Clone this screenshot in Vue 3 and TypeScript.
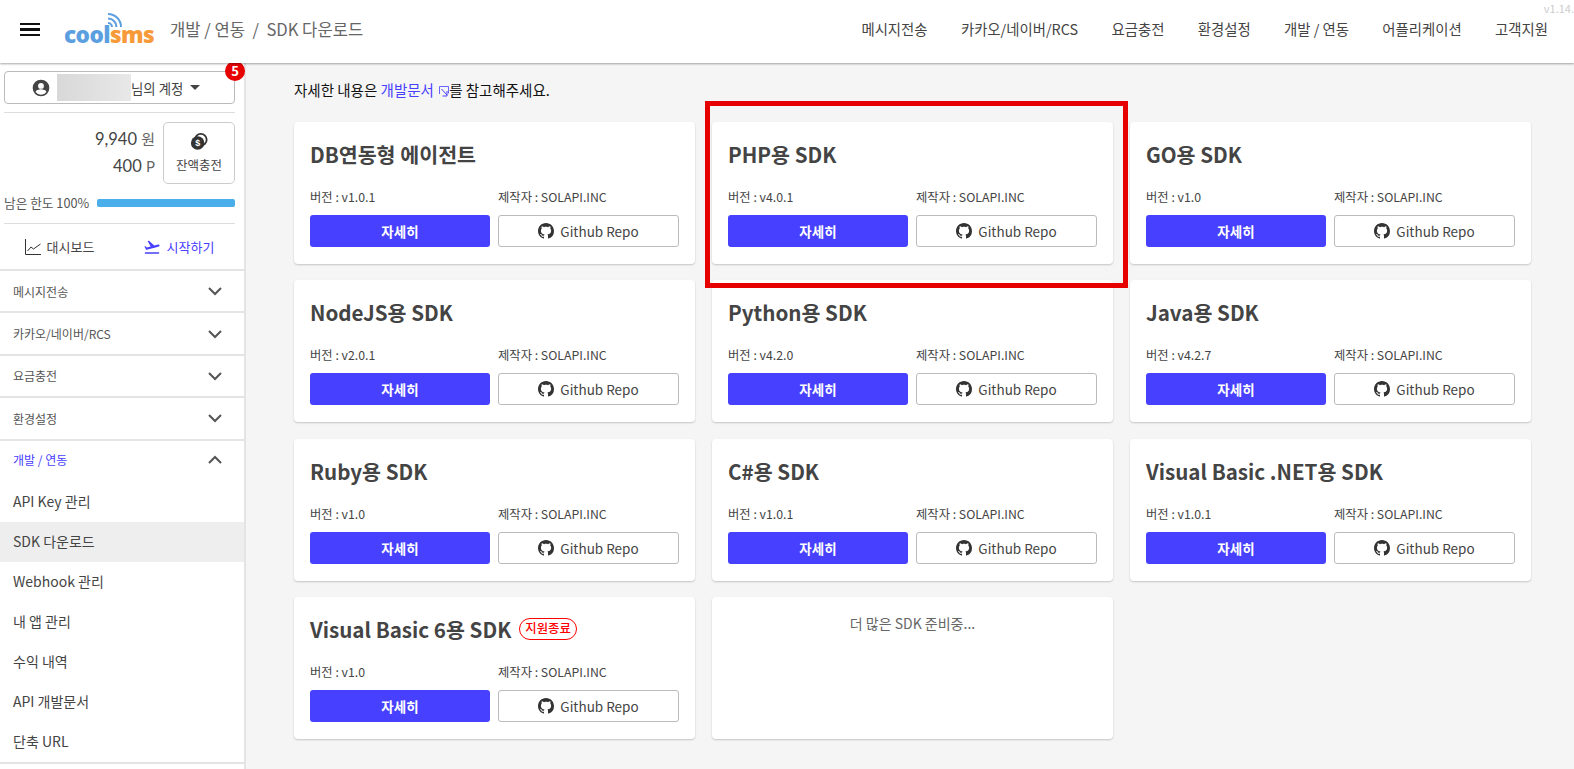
<template>
  <div class="page">
    <header class="topbar">
      <button class="burger" aria-label="menu"><span></span><span></span><span></span></button>
      <div class="logo">
        <svg class="waves" width="15" height="15" viewBox="0 0 15 15">
          <path d="M1 1A13 13 0 0 1 14 14" />
          <path d="M1 5.5A8.5 8.5 0 0 1 9.5 14" />
          <path d="M1 10A4 4 0 0 1 5 14" />
        </svg>
        <span class="cool">cool</span><span class="sms">sms</span>
      </div>
      <div class="crumbs">개발 / 연동 &nbsp;/&nbsp; SDK 다운로드</div>
      <nav class="topnav">
        <a v-for="item in topMenu" :key="item">{{ item }}</a>
      </nav>
      <span class="version">v1.14.</span>
    </header>

    <div class="body">
      <aside class="sidebar">
        <div class="account-wrap">
          <button class="account">
            <svg width="20" height="20" viewBox="0 0 24 24"><path fill="#444" d="M12 2A10 10 0 0 0 2 12a10 10 0 0 0 10 10 10 10 0 0 0 10-10A10 10 0 0 0 12 2zm0 4a3.5 3.5 0 1 1 0 7 3.5 3.5 0 0 1 0-7zm0 14a8 8 0 0 1-6.5-3.3c.03-2.15 4.33-3.33 6.5-3.33s6.47 1.18 6.5 3.33A8 8 0 0 1 12 20z" /></svg>
            <span class="blur"></span>
            <span class="account-name">님의 계정</span>
            <span class="caret"></span>
          </button>
          <span class="badge">5</span>
        </div>

        <div class="balance">
          <div class="amounts">
            <div>9,940 <small>원</small></div>
            <div>400 <small>P</small></div>
          </div>
          <button class="charge">
            <svg width="18" height="18" viewBox="0 0 20 20">
              <circle cx="12" cy="7.5" r="6.5" fill="none" stroke="#333" stroke-width="2" />
              <circle cx="8.5" cy="11" r="7.5" fill="#333" />
              <text x="8.5" y="14.5" text-anchor="middle" class="coin">$</text>
            </svg>
            <span>잔액충전</span>
          </button>
        </div>

        <div class="limit">
          <span>남은 한도 100%</span>
          <div class="track"><div class="fill" :style="{ width: limitPercent + '%' }"></div></div>
        </div>

        <div class="quick">
          <a class="quick-item">
            <svg width="16" height="16" viewBox="0 0 16 16" fill="none" stroke="#333"><path d="M.5 0v15.5H16" /><path d="M2.5 12 6 8l2.5 2L15.5 5" /></svg>
            대시보드
          </a>
          <a class="quick-item start">
            <svg width="18" height="18" viewBox="0 0 24 24"><path fill="#4840ff" d="M2.5 19h19v2h-19zm19.57-9.36c-.21-.8-1.04-1.28-1.84-1.06L14.92 10l-6.9-6.43-1.93.51 4.14 7.17-4.97 1.33-1.97-1.54-1.45.39 1.82 3.16.77 1.33 1.6-.43 5.31-1.42 4.35-1.16L21 11.49c.81-.23 1.28-1.05 1.07-1.85z" /></svg>
            시작하기
          </a>
        </div>

        <div v-for="group in sideMenu" :key="group" class="group">
          <span>{{ group }}</span>
          <svg width="16" height="10" viewBox="0 0 16 10" fill="none" stroke="#555" stroke-width="2"><path d="M2 2l6 6 6-6" /></svg>
        </div>
        <div class="group open">
          <span>개발 / 연동</span>
          <svg width="16" height="10" viewBox="0 0 16 10" fill="none" stroke="#555" stroke-width="2"><path d="M2 8l6-6 6 6" /></svg>
        </div>
        <div class="submenu">
          <a v-for="sub in subMenu" :key="sub" :class="{ active: sub === 'SDK 다운로드' }">{{ sub }}</a>
        </div>
      </aside>

      <main class="content">
        <p class="intro">
          자세한 내용은 <a>개발문서
            <svg class="ext" width="10" height="11" viewBox="0 0 10 11" fill="none" stroke="#4840ff"><path d="M.5 8V.5h9v7" opacity=".8" /><path d="M2.5 3 8 9" /><path d="M8 5v5H3.5" /></svg></a>를 참고해주세요.
        </p>
        <div class="grid">
          <section v-for="sdk in sdks" :key="sdk.title" class="card">
            <h3>{{ sdk.title }}<span v-if="sdk.ended" class="ended">지원종료</span></h3>
            <div class="meta">
              <span>버전 : {{ sdk.version }}</span>
              <span>제작자 : SOLAPI.INC</span>
            </div>
            <div class="actions">
              <button class="primary">자세히</button>
              <button class="repo">
                <svg width="16" height="16" viewBox="0 0 16 16"><path fill="#333" d="M8 0C3.58 0 0 3.58 0 8c0 3.54 2.29 6.53 5.47 7.59.4.07.55-.17.55-.38 0-.19-.01-.82-.01-1.49-2.01.37-2.53-.49-2.69-.94-.09-.23-.48-.94-.82-1.13-.28-.15-.68-.52-.01-.53.63-.01 1.08.58 1.23.82.72 1.21 1.87.87 2.33.66.07-.52.28-.87.51-1.07-1.78-.2-3.64-.89-3.64-3.95 0-.87.31-1.59.82-2.15-.08-.2-.36-1.02.08-2.12 0 0 .67-.21 2.2.82.64-.18 1.32-.27 2-.27.68 0 1.36.09 2 .27 1.53-1.04 2.2-.82 2.2-.82.44 1.1.16 1.92.08 2.12.51.56.82 1.27.82 2.15 0 3.07-1.87 3.75-3.65 3.95.29.25.54.73.54 1.48 0 1.07-.01 1.93-.01 2.2 0 .21.15.46.55.38A8.013 8.013 0 0016 8c0-4.42-3.58-8-8-8z" /></svg>
                Github Repo
              </button>
            </div>
          </section>
          <section class="card more">더 많은 SDK 준비중...</section>
        </div>
        <div class="highlight"></div>
      </main>
    </div>
  </div>
</template>

<script setup lang="ts">
type Sdk = {
  title: string;
  version: string;
  ended?: boolean;
};

const limitPercent = 100;

const topMenu: string[] = ['메시지전송', '카카오/네이버/RCS', '요금충전', '환경설정', '개발 / 연동', '어플리케이션', '고객지원'];
const sideMenu: string[] = ['메시지전송', '카카오/네이버/RCS', '요금충전', '환경설정'];
const subMenu: string[] = ['API Key 관리', 'SDK 다운로드', 'Webhook 관리', '내 앱 관리', '수익 내역', 'API 개발문서', '단축 URL'];

const sdks: Sdk[] = [
  { title: 'DB연동형 에이전트', version: 'v1.0.1' },
  { title: 'PHP용 SDK', version: 'v4.0.1' },
  { title: 'GO용 SDK', version: 'v1.0' },
  { title: 'NodeJS용 SDK', version: 'v2.0.1' },
  { title: 'Python용 SDK', version: 'v4.2.0' },
  { title: 'Java용 SDK', version: 'v4.2.7' },
  { title: 'Ruby용 SDK', version: 'v1.0' },
  { title: 'C#용 SDK', version: 'v1.0.1' },
  { title: 'Visual Basic .NET용 SDK', version: 'v1.0.1' },
  { title: 'Visual Basic 6용 SDK', version: 'v1.0', ended: true }
];
</script>

<style>
html, body {
  margin: 0;
  background: #f5f5f5;
}
</style>

<style scoped>
.page {
  height: 769px;
  overflow: hidden;
  display: flex;
  flex-direction: column;
  font-family: "Noto Sans CJK KR", "Noto Sans", sans-serif;
  color: #444;
  background: #f5f5f5;
}

button {
  font-family: inherit;
  cursor: pointer;
}

.topbar {
  position: relative;
  z-index: 2;
  flex: none;
  height: 63px;
  display: flex;
  align-items: center;
  background: #fff;
  box-shadow: 0 1px 2px rgba(0, 0, 0, 0.35);
}

.burger {
  width: 20px;
  margin-left: 20px;
  margin-bottom: 4px;
  padding: 0;
  border: 0;
  background: none;
  display: flex;
  flex-direction: column;
  gap: 3px;
}

.burger span {
  height: 2.5px;
  background: #111;
}

.logo {
  position: relative;
  margin-left: 24px;
  width: 96px;
  padding-top: 7px;
  font-family: "Open Sans", sans-serif;
  font-weight: 800;
  font-size: 22.6px;
  letter-spacing: -0.6px;
  line-height: 30px;
}

.cool {
  color: #5b9fe0;
}

.sms {
  color: #f79a3a;
}

.waves {
  position: absolute;
  left: 43px;
  top: 0;
  fill: none;
  stroke: #5b9fe0;
  stroke-width: 2;
}

.crumbs {
  margin-left: 10px;
  margin-bottom: 6px;
  font-size: 16.6px;
  color: #666;
}

.topnav {
  margin-left: auto;
  margin-right: 26px;
  margin-bottom: 6px;
  display: flex;
  gap: 33.3px;
  font-size: 14.4px;
  color: #444;
}

.version {
  position: absolute;
  top: 0;
  right: 0;
  font-size: 11px;
  color: #ccc;
}

.body {
  flex: 1;
  display: flex;
  min-height: 0;
}

.sidebar {
  flex: none;
  width: 244px;
  background: #fff;
  border-right: 2px solid #e4e4e4;
}

.account-wrap {
  position: relative;
  margin: 8px 9px 8px 4px;
}

.account {
  width: 100%;
  height: 33px;
  padding: 0 0 0 26px;
  display: flex;
  align-items: center;
  background: #fff;
  border: 1px solid #bbb;
  border-radius: 4px;
  font-size: 13.4px;
  color: #444;
}

.blur {
  width: 74px;
  height: 27px;
  margin-left: 6px;
  background: linear-gradient(90deg, #d8d8d8, #e8e8e8);
}

.account-name {
  margin-right: 7px;
}

.caret {
  border-left: 5.5px solid transparent;
  border-right: 5.5px solid transparent;
  border-top: 5.5px solid #444;
}

.badge {
  position: absolute;
  top: -10px;
  right: -10px;
  width: 20px;
  height: 20px;
  border-radius: 50%;
  background: #e60000;
  color: #fff;
  font-size: 13px;
  font-weight: 700;
  line-height: 20px;
  text-align: center;
}

.balance {
  margin: 0 9px 0 4px;
  padding-top: 9px;
  border-top: 1px solid #ddd;
  display: flex;
  justify-content: flex-end;
  gap: 8px;
}

.amounts {
  padding-top: 4px;
  font-family: Lato, "Noto Sans CJK KR", sans-serif;
  font-size: 16.5px;
  line-height: 27px;
  color: #444;
  text-align: right;
}

.amounts small {
  font-size: 15px;
  color: #666;
}

.charge {
  width: 72px;
  height: 62px;
  padding: 0;
  display: flex;
  flex-direction: column;
  align-items: center;
  justify-content: center;
  gap: 4px;
  background: #fff;
  border: 1px solid #ccc;
  border-radius: 5px;
  font-size: 12.5px;
  color: #444;
}

.coin {
  font-family: "Liberation Sans", sans-serif;
  font-size: 10px;
  font-weight: 700;
  fill: #fff;
}

.limit {
  margin: 9px 9px 0 4px;
  padding-bottom: 11px;
  display: flex;
  align-items: center;
  gap: 8px;
  border-bottom: 1px solid #ddd;
  font-size: 12.7px;
  color: #555;
  white-space: nowrap;
}

.track {
  flex: 1;
  height: 8px;
  border-radius: 2px;
  background: #eee;
  overflow: hidden;
}

.fill {
  height: 100%;
  background: #4aaeea;
}

.quick {
  height: 45px;
  display: flex;
  align-items: center;
  border-bottom: 2px solid #e4e4e4;
  font-size: 13px;
}

.quick-item {
  flex: 1;
  display: flex;
  align-items: center;
  justify-content: center;
  gap: 6px;
  color: #444;
}

.quick-item.start {
  padding-right: 6px;
  color: #4840ff;
}

.group {
  height: 40.4px;
  padding: 0 21px 0 13px;
  display: flex;
  align-items: center;
  justify-content: space-between;
  border-bottom: 2px solid #e4e4e4;
  font-size: 12px;
  color: #555;
}

.group.open {
  border-bottom: 0;
  color: #4840ff;
}

.group.open > * {
  margin-bottom: 2px;
}

.submenu {
  padding-top: 1px;
  border-bottom: 2px solid #e4e4e4;
}

.submenu a {
  display: block;
  height: 40px;
  padding-left: 13px;
  font-size: 14px;
  line-height: 38px;
  color: #444;
}

.submenu a.active {
  background: #eee;
}

.content {
  position: relative;
  flex: 1;
  min-width: 0;
  padding: 0 43px 0 48px;
}

.intro {
  margin: 15px 0 0;
  height: 44px;
  font-size: 14.5px;
  line-height: 24px;
  color: #111;
}

.intro a {
  color: #4840ff;
}

.ext {
  margin-left: 2px;
  vertical-align: -1px;
}

.grid {
  display: grid;
  grid-template-columns: repeat(3, 401px);
  grid-auto-rows: 142px;
  column-gap: 17px;
  row-gap: 16.33px;
}

.card {
  padding: 16px;
  background: #fff;
  border-radius: 4px;
  box-shadow: 0 1px 2px rgba(0, 0, 0, 0.2);
  box-sizing: border-box;
}

.card h3 {
  margin: 0;
  height: 32px;
  display: flex;
  align-items: center;
  font-size: 20.6px;
  font-weight: 700;
  color: #444;
}

.ended {
  margin-left: 8px;
  padding: 0 5px;
  height: 20px;
  border: 1px solid #f00;
  border-radius: 11px;
  font-size: 12.4px;
  font-weight: 500;
  line-height: 19px;
  color: #f00;
}

.meta {
  margin-top: 18px;
  display: grid;
  grid-template-columns: 188px 1fr;
  font-size: 12.3px;
  line-height: 18px;
  color: #444;
}

.actions {
  margin-top: 9px;
  display: grid;
  grid-template-columns: 180px 181px;
  gap: 8px;
}

.actions button {
  height: 32px;
  padding: 0;
  border-radius: 3px;
  font-size: 13.5px;
}

.primary {
  border: 0;
  background: #4840ff;
  color: #fff;
  font-weight: 700;
}

.repo {
  display: flex;
  align-items: center;
  justify-content: center;
  gap: 6px;
  background: #fff;
  border: 1px solid #bbb;
  color: #444;
}

.more {
  padding-top: 16px;
  font-size: 14px;
  text-align: center;
  color: #666;
}

.highlight {
  position: absolute;
  left: 459px;
  top: 38px;
  width: 423px;
  height: 187px;
  box-sizing: border-box;
  border: 5px solid #e60000;
  pointer-events: none;
}
</style>
